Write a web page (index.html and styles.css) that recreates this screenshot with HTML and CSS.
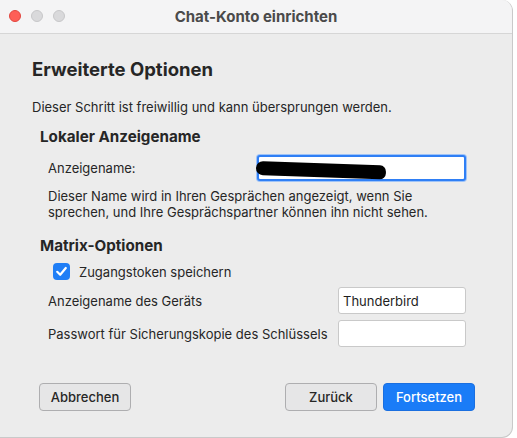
FILE: index.html
```html
<!DOCTYPE html>
<html lang="de">
<head>
<meta charset="utf-8">
<title>Chat-Konto einrichten</title>
<link rel="stylesheet" href="styles.css">
</head>
<body>
<div class="window">
  <div class="titlebar">
    <div class="lights">
      <span class="light red"></span>
      <span class="light gray"></span>
      <span class="light gray"></span>
    </div>
    <div class="title">Chat-Konto einrichten</div>
  </div>
  <div class="content">
    <h1 class="heading">Erweiterte Optionen</h1>
    <p class="intro">Dieser Schritt ist freiwillig und kann übersprungen werden.</p>

    <h2 class="section">Lokaler Anzeigename</h2>
    <div class="row first-row">
      <span class="label">Anzeigename:</span>
      <div class="input focus wide">
        <span class="scribble"></span>
      </div>
    </div>
    <p class="note">Dieser Name wird in Ihren Gesprächen angezeigt, wenn Sie<br>sprechen, und Ihre Gesprächspartner können ihn nicht sehen.</p>

    <h2 class="section matrix">Matrix-Optionen</h2>
    <label class="check-row">
      <span class="checkbox">
        <svg width="17" height="17" viewBox="0 0 17 17"><path d="M4.2 8.8 L7.2 11.8 L12.8 5" fill="none" stroke="#fff" stroke-width="2.2" stroke-linecap="round" stroke-linejoin="round"/></svg>
      </span>
      <span class="check-label">Zugangstoken speichern</span>
    </label>
    <div class="row device-row">
      <span class="label">Anzeigename des Geräts</span>
      <div class="input narrow">Thunderbird</div>
    </div>
    <div class="row pass-row">
      <span class="label">Passwort für Sicherungskopie des Schlüssels</span>
      <div class="input narrow"></div>
    </div>

    <div class="buttons">
      <button class="btn">Abbrechen</button>
      <div class="btn-group">
        <button class="btn">Zurück</button>
        <button class="btn primary">Fortsetzen</button>
      </div>
    </div>
  </div>
</div>
</body>
</html>
```

FILE: styles.css
```css
* { box-sizing: border-box; }

html, body {
  margin: 0;
  padding: 0;
  background: #ffffff;
}

body {
  font-family: "Inter", "Liberation Sans", sans-serif;
  color: #262626;
  font-size: 13px;
}

.window {
  width: 513px;
  height: 438px;
  background: #ececec;
  border-right: 1px solid #c9c9c9;
  border-bottom: 1px solid #c9c9c9;
  border-radius: 0 11px 11px 0;
  overflow: hidden;
  display: flex;
  flex-direction: column;
}

.titlebar {
  height: 34px;
  flex: 0 0 34px;
  background: #f4f4f5;
  border-bottom: 1px solid #d6d6d6;
  position: relative;
  display: flex;
  align-items: center;
  justify-content: center;
}

.lights {
  position: absolute;
  left: 9px;
  top: 10px;
  display: flex;
  gap: 10px;
}

.light {
  width: 12px;
  height: 12px;
  border-radius: 50%;
  display: block;
}

.light.red {
  background: #fe5f57;
  border: 0.5px solid #e2463f;
}

.light.gray {
  background: #d9d9db;
  border: 0.5px solid #c7c7c9;
}

.title {
  font-weight: 700;
  font-size: 15px;
  color: #4a4a4a;
}

.content {
  padding: 24px 0 0 32px;
  display: flex;
  flex-direction: column;
}

.heading {
  margin: 0;
  font-size: 18.5px;
  line-height: 22px;
  font-weight: 700;
  color: #262626;
}

.intro {
  margin: 19px 0 0 0;
  line-height: 16px;
}

.section {
  margin: 13px 0 0 8px;
  font-size: 15.2px;
  line-height: 18px;
  font-weight: 700;
  color: #262626;
}

.section.matrix {
  margin-top: 17px;
}

.row {
  display: flex;
  align-items: center;
  justify-content: space-between;
  margin-left: 16px;
  width: 418px;
}

.first-row {
  margin-top: 9px;
}

.device-row {
  margin-top: 7px;
}

.pass-row {
  margin-top: 6px;
}

.label {
  line-height: 16px;
}

.input {
  height: 27px;
  background: #ffffff;
  border: 1px solid #c9c9c9;
  border-radius: 3px;
  padding: 0 4px;
  display: flex;
  align-items: center;
  line-height: 16px;
  color: #1e1e1e;
}

.input.wide {
  width: 209px;
  height: 26px;
}

.input.narrow {
  width: 128px;
}

.input.focus {
  border: 2px solid #2f7ff5;
  box-shadow: 0 0 0 1px #9ec3f8;
  padding: 0;
}

.scribble {
  display: block;
  width: 130px;
  height: 14px;
  margin-left: -3px;
  margin-top: -1px;
  background: #000000;
  border-radius: 8px 7px 7px 8px;
  transform: rotate(2deg);
  transform-origin: left center;
}

.note {
  margin: 7px 0 0 16px;
  line-height: 16px;
}

.check-row {
  display: flex;
  align-items: center;
  margin: 8px 0 0 21px;
  gap: 9px;
}

.checkbox {
  width: 17px;
  height: 17px;
  border-radius: 4px;
  background: #1f7ef6;
  display: block;
}

.checkbox svg {
  display: block;
}

.check-label {
  line-height: 16px;
}

.buttons {
  display: flex;
  justify-content: space-between;
  align-items: center;
  margin: 36px 0 0 7px;
  width: 436px;
}

.btn-group {
  display: flex;
  gap: 6px;
}

.btn {
  font-family: inherit;
  font-size: 13px;
  color: #262626;
  height: 28px;
  width: 92px;
  background: #e6e6e7;
  border: 1px solid #aeaeb0;
  border-radius: 4px;
  padding: 0;
  font-weight: 500;
}

.btn.primary {
  background: #1a7cf7;
  border-color: #1a6fe0;
  color: #ffffff;
}
```
